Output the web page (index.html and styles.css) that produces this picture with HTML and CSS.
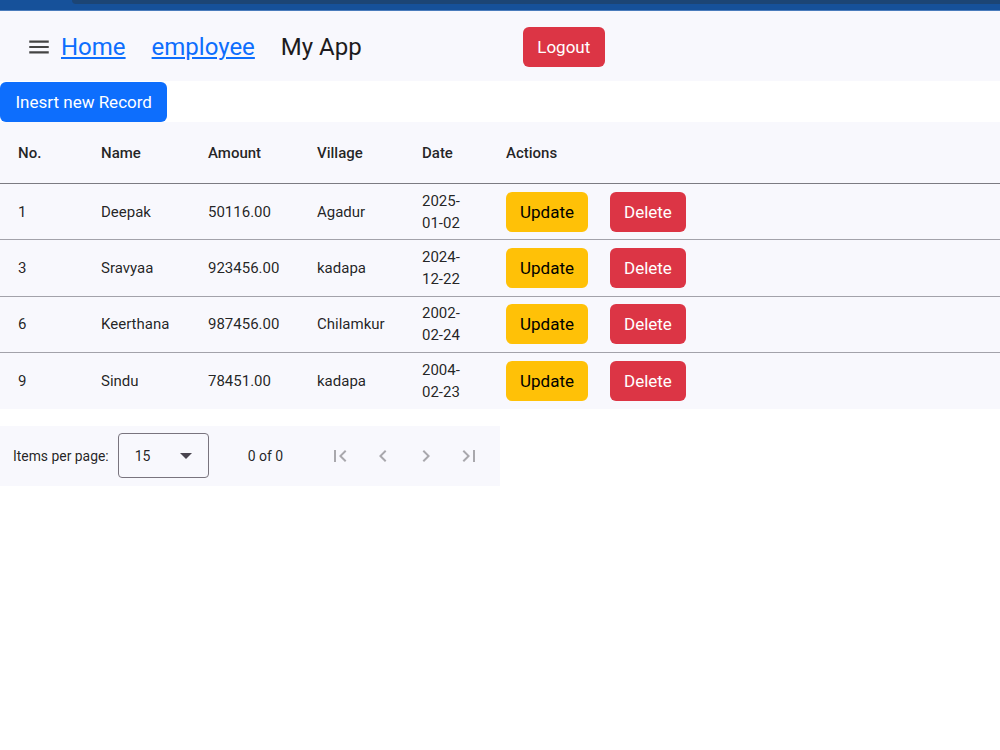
FILE: index.html
```html
<!DOCTYPE html>
<html lang="en">
<head>
    <meta charset="UTF-8">
    <title>My App</title>
    <link rel="stylesheet" href="styles.css">
</head>
<body>
    <div class="topbar"><div class="topbar-shade"></div></div>
    <nav class="navbar">
        <svg class="menu-icon" width="26" height="26" viewBox="0 0 24 24">
            <path d="M3 18h18v-2H3v2zm0-5h18v-2H3v2zm0-7v2h18V6H3z" fill="#444"/>
        </svg>
        <a href="#" class="nav-link first">Home</a>
        <a href="#" class="nav-link">employee</a>
        <span class="brand">My App</span>
        <button class="btn btn-danger logout">Logout</button>
    </nav>

    <button class="btn btn-primary insert-btn">Inesrt new Record</button>

    <table class="records">
        <thead>
            <tr>
                <th class="col-no">No.</th>
                <th class="col-name">Name</th>
                <th class="col-amount">Amount</th>
                <th class="col-village">Village</th>
                <th class="col-date">Date</th>
                <th>Actions</th>
            </tr>
        </thead>
        <tbody>
            <tr>
                <td class="col-no">1</td>
                <td>Deepak</td>
                <td>50116.00</td>
                <td>Agadur</td>
                <td class="date">2025-01-02</td>
                <td class="actions"><button class="btn btn-warning">Update</button><button class="btn btn-danger">Delete</button></td>
            </tr>
            <tr>
                <td class="col-no">3</td>
                <td>Sravyaa</td>
                <td>923456.00</td>
                <td>kadapa</td>
                <td class="date">2024-12-22</td>
                <td class="actions"><button class="btn btn-warning">Update</button><button class="btn btn-danger">Delete</button></td>
            </tr>
            <tr>
                <td class="col-no">6</td>
                <td>Keerthana</td>
                <td>987456.00</td>
                <td>Chilamkur</td>
                <td class="date">2002-02-24</td>
                <td class="actions"><button class="btn btn-warning">Update</button><button class="btn btn-danger">Delete</button></td>
            </tr>
            <tr>
                <td class="col-no">9</td>
                <td>Sindu</td>
                <td>78451.00</td>
                <td>kadapa</td>
                <td class="date">2004-02-23</td>
                <td class="actions"><button class="btn btn-warning">Update</button><button class="btn btn-danger">Delete</button></td>
            </tr>
        </tbody>
    </table>

    <div class="paginator">
        <span class="page-label">Items per page:</span>
        <div class="page-select">
            <span>15</span>
            <svg width="12" height="6" viewBox="0 0 10 5"><path d="M0 0l5 5 5-5z" fill="#49454f"/></svg>
        </div>
        <span class="page-range">0 of 0</span>
        <div class="page-nav">
            <svg width="24" height="24" viewBox="0 0 24 24"><path d="M18.41 16.59L13.82 12l4.59-4.59L17 6l-6 6 6 6zM6 6h2v12H6z"/></svg>
            <svg width="24" height="24" viewBox="0 0 24 24"><path d="M15.41 7.41L14 6l-6 6 6 6 1.41-1.41L10.83 12z"/></svg>
            <svg width="24" height="24" viewBox="0 0 24 24"><path d="M10 6L8.59 7.41 13.17 12l-4.58 4.59L10 18l6-6z"/></svg>
            <svg width="24" height="24" viewBox="0 0 24 24"><path d="M5.59 7.41L10.18 12l-4.59 4.59L7 18l6-6-6-6zM16 6h2v12h-2z"/></svg>
        </div>
    </div>
</body>
</html>
```

FILE: styles.css
```css
body {
    margin: 0;
    background: #fff;
    font-family: Roboto, "Liberation Sans", sans-serif;
    color: rgba(0,0,0,0.87);
}
.topbar {
    height: 11px;
    background: #16519a;
    border-bottom: 1px solid #4a7cbc;
    box-sizing: border-box;
}
.topbar-shade {
    margin-left: 72px;
    height: 4px;
    background: #1c4575;
    border-bottom-left-radius: 6px;
}
.navbar {
    display: flex;
    align-items: center;
    height: 68px;
    padding-top: 2px;
    padding-left: 26px;
    background: #f8f8fd;
}
.menu-icon {
    margin-right: 9px;
}
.nav-link {
    font-size: 24px;
    color: #0d6efd;
    text-decoration: underline;
    margin-right: 26px;
}
.brand {
    font-size: 24px;
    color: #1d1b20;
}
.btn {
    border: none;
    border-radius: 6px;
    font-family: Roboto, "Liberation Sans", sans-serif;
    font-size: 17px;
    line-height: 24px;
    padding: 8px 14px;
    cursor: pointer;
}
.btn-primary {
    background: #0d6efd;
    color: #fff;
}
.btn-danger {
    background: #dc3545;
    color: #fff;
}
.btn-warning {
    background: #ffc107;
    color: #000;
}
.logout {
    margin-left: 161px;
    padding: 8px 14.5px;
}
.insert-btn {
    display: block;
    margin-top: 1px;
    padding: 8px 15.5px;
}
.records {
    width: 100%;
    border-collapse: collapse;
    table-layout: fixed;
    background: #f8f8fd;
    font-size: 15px;
}
.records th {
    height: 61px;
    text-align: left;
    font-weight: 500;
    border-bottom: 1px solid #7c7b82;
    padding: 0;
}
.records td {
    height: 55.4px;
    padding: 0 16px 0 0;
    border-bottom: 1px solid #a3a2aa;
    line-height: 22px;
}
.records tr:last-child td {
    border-bottom: none;
}
.records .col-no {
    width: 83px;
    padding-left: 18px;
}
.col-name { width: 107px; }
.col-amount { width: 109px; }
.col-village { width: 105px; }
.col-date { width: 84px; }
.records .date {
    padding-right: 30px;
}
.actions .btn {
    margin-right: 22px;
}
.paginator {
    display: flex;
    align-items: center;
    width: 500px;
    height: 60px;
    margin-top: 17px;
    background: #f8f8fd;
    font-size: 14px;
}
.page-label {
    margin-left: 13px;
    margin-right: 9px;
    font-size: 13.9px;
}
.page-select {
    display: flex;
    align-items: center;
    justify-content: space-between;
    box-sizing: border-box;
    width: 91px;
    height: 45px;
    padding: 0 16px 0 16px;
    border: 1px solid #79747e;
    border-radius: 4px;
}
.page-range {
    margin-left: 39px;
}
.page-nav {
    display: flex;
    gap: 19px;
    margin-left: 45px;
}
.page-nav svg {
    fill: #a9a8ad;
}
```
